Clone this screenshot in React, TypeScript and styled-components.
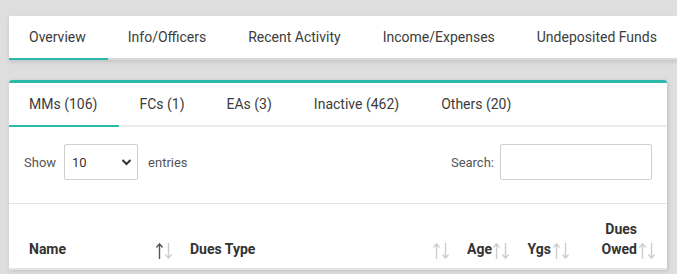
import React from "react";
import styled, { createGlobalStyle } from "styled-components";

const TEAL = "#2bb9ab";

const GlobalStyle = createGlobalStyle`
  html, body { margin: 0; padding: 0; }
  body {
    background: #dedede;
    font-family: Roboto, "Liberation Sans", Arial, sans-serif;
    color: #444;
    overflow: hidden;
  }
  * { box-sizing: border-box; }
`;

const Page = styled.div`
  height: 274px;
  padding: 16px 0 0 9px;
  overflow: hidden;
`;

const TopNav = styled.nav`
  display: flex;
  background: #fff;
  box-shadow: 0 2px 4px rgba(0, 0, 0, 0.12);
`;

const NavTab = styled.div<{ $active?: boolean }>`
  height: 44px;
  padding: 0 22px 0 20px;
  display: flex;
  align-items: center;
  font-size: 14px;
  color: #3c3c3c;
  white-space: nowrap;
  border-bottom: 2px solid ${(p) => (p.$active ? TEAL : "#d8d8d8")};
  flex-shrink: 0;
`;

const Card = styled.section`
  margin: 20px 10px 0 0;
  background: #fff;
  border-top: 3px solid ${TEAL};
  border-radius: 3px 3px 0 0;
  box-shadow: 1px 1px 4px rgba(0, 0, 0, 0.14);
`;

const CardTabs = styled.div`
  display: flex;
  border-bottom: 2px solid #ececec;
`;

const CardTab = styled.div<{ $active?: boolean }>`
  height: 44px;
  margin-bottom: -2px;
  padding: 0 22px 0 20px;
  display: flex;
  align-items: center;
  font-size: 14px;
  color: #3c3c3c;
  white-space: nowrap;
  border-bottom: 2px solid ${(p) => (p.$active ? TEAL : "transparent")};
`;

const Controls = styled.div`
  display: flex;
  justify-content: space-between;
  align-items: center;
  padding: 17px 15px 23px 15px;
  font-size: 13px;
  color: #555;
`;

const ControlGroup = styled.label`
  display: flex;
  align-items: center;
`;

const SelectBox = styled.div`
  width: 74px;
  height: 36px;
  margin: 0 10px 0 8px;
  border: 1px solid #cfcfcf;
  border-radius: 2px;
  display: flex;
  align-items: center;
  justify-content: space-between;
  padding: 0 5px 0 7px;
  font-size: 13px;
  color: #333;
`;

const SearchInput = styled.input`
  width: 152px;
  height: 36px;
  margin-left: 6px;
  border: 1px solid #cfcfcf;
  border-radius: 2px;
  outline: none;
  font: inherit;
`;

const HeaderRow = styled.div`
  display: grid;
  grid-template-columns: 171px 277px 60px 60px 86px;
  height: 67px;
  border-top: 1px solid #e4e4e4;
  border-bottom: 2px solid #e4e4e4;
`;

const HeadCell = styled.div<{ $first?: boolean }>`
  display: flex;
  align-items: flex-end;
  padding: 0 7px 9px ${(p) => (p.$first ? "20px" : "10px")};
`;

const HeadLabel = styled.span<{ $right?: boolean }>`
  flex: 1;
  min-width: 0;
  font-size: 14px;
  font-weight: 700;
  line-height: 20px;
  color: #333;
  text-align: ${(p) => (p.$right ? "right" : "left")};
`;

const Arrows = styled.svg`
  flex-shrink: 0;
  margin-left: 2px;
`;

function SortArrows({ active }: { active?: boolean }) {
  const light = "#cdcdcd";
  return (
    <Arrows width="17" height="17" viewBox="0 0 17 17">
      <g fill="none" strokeWidth="1.4" strokeLinecap="round" strokeLinejoin="round">
        <g stroke={active ? "#555" : light}>
          <line x1="3.5" y1="2" x2="3.5" y2="16.5" />
          <polyline points="0.8,5 3.5,2 6.2,5" />
        </g>
        <g stroke={light}>
          <line x1="12.5" y1="1.5" x2="12.5" y2="16" />
          <polyline points="9.8,13 12.5,16 15.2,13" />
        </g>
      </g>
    </Arrows>
  );
}

function Chevron() {
  return (
    <svg width="11" height="8" viewBox="0 0 11 8">
      <polyline points="1.5,2 5.5,6 9.5,2" fill="none" stroke="#333" strokeWidth="2" />
    </svg>
  );
}

export default function App() {
  const topTabs = ["Overview", "Info/Officers", "Recent Activity", "Income/Expenses", "Undeposited Funds"];
  const cardTabs = ["MMs (106)", "FCs (1)", "EAs (3)", "Inactive (462)", "Others (20)"];
  return (
    <>
      <GlobalStyle />
      <Page>
        <TopNav>
          {topTabs.map((t, i) => (
            <NavTab key={t} $active={i === 0}>
              {t}
            </NavTab>
          ))}
        </TopNav>
        <Card>
          <CardTabs>
            {cardTabs.map((t, i) => (
              <CardTab key={t} $active={i === 0}>
                {t}
              </CardTab>
            ))}
          </CardTabs>
          <Controls>
            <ControlGroup>
              Show
              <SelectBox>
                <span>10</span>
                <Chevron />
              </SelectBox>
              entries
            </ControlGroup>
            <ControlGroup>
              Search:
              <SearchInput type="search" />
            </ControlGroup>
          </Controls>
          <HeaderRow>
            <HeadCell $first>
              <HeadLabel>Name</HeadLabel>
              <SortArrows active />
            </HeadCell>
            <HeadCell>
              <HeadLabel>Dues Type</HeadLabel>
              <SortArrows />
            </HeadCell>
            <HeadCell>
              <HeadLabel $right>Age</HeadLabel>
              <SortArrows />
            </HeadCell>
            <HeadCell>
              <HeadLabel $right>Ygs</HeadLabel>
              <SortArrows />
            </HeadCell>
            <HeadCell>
              <HeadLabel $right>Dues Owed</HeadLabel>
              <SortArrows />
            </HeadCell>
          </HeaderRow>
        </Card>
      </Page>
    </>
  );
}
